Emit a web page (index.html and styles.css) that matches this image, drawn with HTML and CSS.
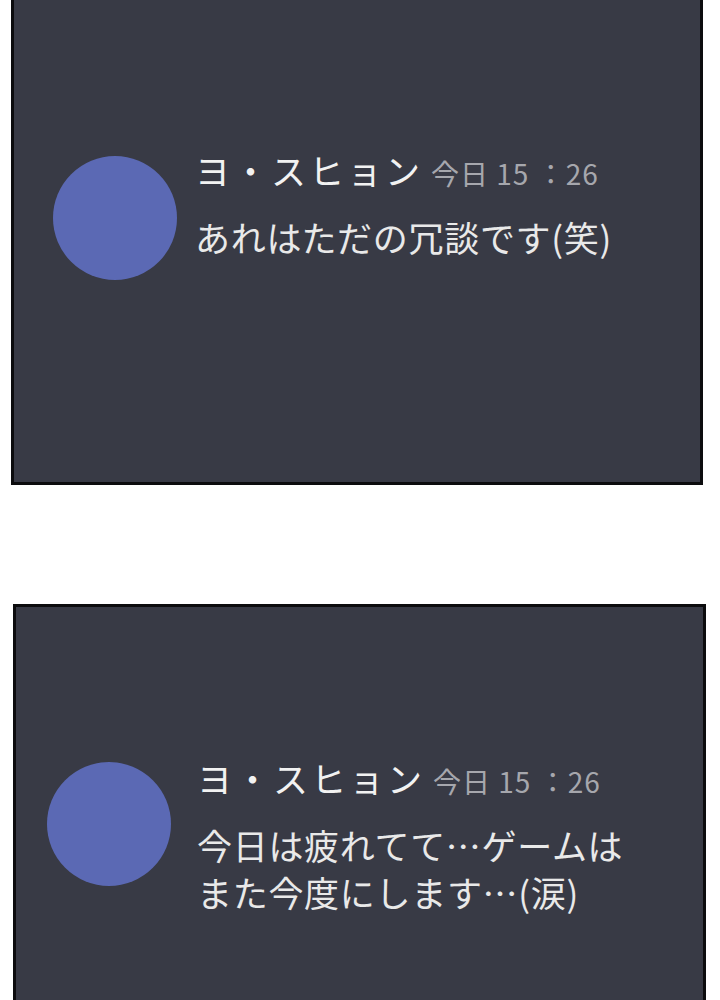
FILE: index.html
```html
<!DOCTYPE html>
<html lang="ja">
<head>
<meta charset="utf-8">
<title>チャット</title>
<link rel="stylesheet" href="styles.css">
</head>
<body>
<div class="page">
  <section class="panel panel-first">
    <div class="message">
      <div class="avatar"></div>
      <div class="body">
        <div class="head">
          <span class="name">ヨ・スヒョン</span>
          <span class="time">今日 15 ：26</span>
        </div>
        <p class="text">あれはただの冗談です(笑)</p>
      </div>
    </div>
  </section>
  <section class="panel panel-second">
    <div class="message">
      <div class="avatar"></div>
      <div class="body">
        <div class="head">
          <span class="name">ヨ・スヒョン</span>
          <span class="time">今日 15 ：26</span>
        </div>
        <p class="text">今日は疲れてて…ゲームは<br>また今度にします…(涙)</p>
      </div>
    </div>
  </section>
</div>
</body>
</html>
```

FILE: styles.css
```css
html, body {
  margin: 0;
  padding: 0;
  background: #ffffff;
}

body {
  width: 720px;
  height: 1000px;
  overflow: hidden;
  font-family: "Noto Sans CJK JP", "Noto Sans", sans-serif;
}

.page {
  display: flex;
  flex-direction: column;
  gap: 119px;
}

.panel {
  background: #383a45;
  border: 3px solid #0c0c0e;
  box-sizing: border-box;
}

.panel-first {
  border-top: none;
  margin-left: 11px;
  width: 692px;
  height: 485px;
  padding: 147px 0 0 39px;
}

.panel-second {
  border-bottom: none;
  margin-left: 13px;
  width: 693px;
  height: 396px;
  padding: 148px 0 0 31px;
}

.message {
  display: flex;
  align-items: flex-start;
}

.avatar {
  flex: none;
  width: 124px;
  height: 124px;
  border-radius: 50%;
  background: #5b69b4;
}

.panel-first .avatar {
  margin-top: 9px;
  margin-right: 18px;
}

.panel-second .avatar {
  margin-top: 7px;
  margin-right: 26px;
}

.body {
  display: flex;
  flex-direction: column;
}

.head {
  display: flex;
  align-items: baseline;
  line-height: 46px;
  margin-bottom: 17px;
}

.name {
  font-size: 35px;
  letter-spacing: 3px;
  color: #f2f2f2;
}

.time {
  margin-left: 8px;
  font-size: 28px;
  letter-spacing: 1px;
  color: #a6a7ad;
}

.text {
  margin: 0;
  font-size: 35px;
  letter-spacing: 0.7px;
  line-height: 47px;
  color: #e9e9e9;
}
```
